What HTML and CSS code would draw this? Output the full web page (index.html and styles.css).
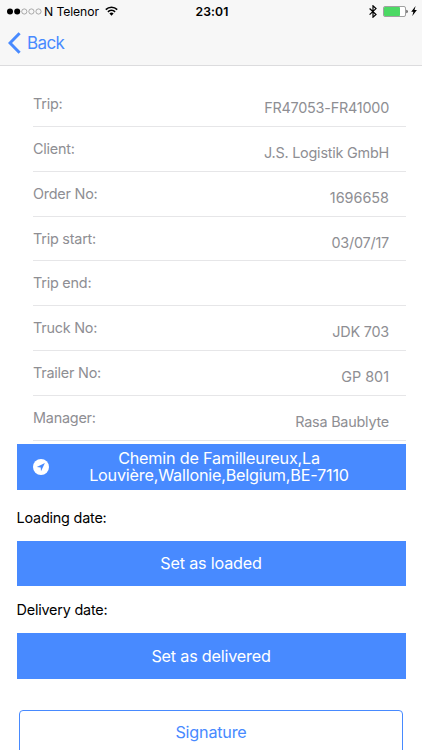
FILE: index.html
```
<!DOCTYPE html>
<html lang="en">
<head>
  <meta charset="UTF-8">
  <title>Trip details</title>
  <link rel="stylesheet" href="styles.css">
</head>
<body>
  <header class="header">
    <div class="status-bar">
      <div class="carrier">
        <svg class="signal" viewBox="0 0 35 7">
          <circle cx="3" cy="3.5" r="3"/>
          <circle cx="10.2" cy="3.5" r="3"/>
          <circle class="empty" cx="17.3" cy="3.5" r="2.6"/>
          <circle class="empty" cx="24.4" cy="3.5" r="2.6"/>
          <circle class="empty" cx="31.5" cy="3.5" r="2.6"/>
        </svg>
        <span class="carrier-name">N Telenor</span>
        <svg class="wifi" viewBox="0 0 13 10">
          <path d="M0.8 3.6a8.2 8.2 0 0 1 11.4 0M2.9 5.8a5.2 5.2 0 0 1 7.2 0"/>
          <path class="dot" d="M6.5 9.7L4.4 7.6a3 3 0 0 1 4.2 0z"/>
        </svg>
      </div>
      <div class="clock">23:01</div>
      <div class="power">
        <svg class="bluetooth" viewBox="0 0 8 13">
          <path d="M0.6 3.5l6.4 6L4 12.2V0.8l3 2.8-6.4 6"/>
        </svg>
        <svg class="battery" viewBox="0 0 25 11">
          <rect class="case" x="0.5" y="0.5" width="22" height="10" rx="1.5"/>
          <rect class="level" x="1" y="1" width="16" height="9" rx="0.8"/>
          <path class="tip" d="M23.3 3.7q1.5 0.3 1.5 1.8t-1.5 1.8z"/>
        </svg>
        <svg class="bolt" viewBox="0 0 6 10">
          <path d="M4.6 0.1L0.2 5.7h2.2L1.3 9.9l4.6-5.8H3.5z"/>
        </svg>
      </div>
    </div>
    <a href="#" class="back">
      <svg class="chevron" viewBox="0 0 13 22">
        <path d="M11.6 1.2L2 11l9.6 9.8"/>
      </svg>
      <span>Back</span>
    </a>
  </header>

  <main class="content">
    <div class="list">
      <div class="row"><span class="label">Trip:</span><span class="value">FR47053-FR41000</span></div>
      <div class="row"><span class="label">Client:</span><span class="value">J.S. Logistik GmbH</span></div>
      <div class="row"><span class="label">Order No:</span><span class="value number">1696658</span></div>
      <div class="row"><span class="label">Trip start:</span><span class="value">03/07/17</span></div>
      <div class="row"><span class="label">Trip end:</span><span class="value"></span></div>
      <div class="row"><span class="label">Truck No:</span><span class="value">JDK 703</span></div>
      <div class="row"><span class="label">Trailer No:</span><span class="value number">GP 801</span></div>
      <div class="row"><span class="label">Manager:</span><span class="value">Rasa Baublyte</span></div>
    </div>

    <button class="button address">
      <svg class="navigate" viewBox="0 0 16 16">
        <circle cx="8" cy="8" r="8"/>
        <path d="M11.9 4.1L3.8 8.1l3.9 0.3 0.3 3.8z"/>
      </svg>
      <span class="address-text">Chemin de Familleureux,La<br>Louvière,Wallonie,Belgium,BE-7110</span>
    </button>

    <p class="date loading">Loading date:</p>
    <button class="button">Set as loaded</button>

    <p class="date">Delivery date:</p>
    <button class="button">Set as delivered</button>

    <button class="button outline">Signature</button>
  </main>
</body>
</html>
```

FILE: styles.css
```
* {
  box-sizing: border-box;
}
body {
  margin: 0;
  height: 750px;
  overflow: hidden;
  background: #fff;
  color: #000;
  font-family: Inter, "Liberation Sans", sans-serif;
  font-size: 14.4px;
}
svg {
  display: block;
  flex: none;
}

/* header */
.header {
  height: 66px;
  background: #f7f7f7;
  border-bottom: 1px solid #dcdcde;
}
.status-bar {
  display: grid;
  grid-template-columns: 1fr auto 1fr;
  align-items: center;
  height: 22px;
  padding: 0 5px 0 7px;
  font-size: 12.2px;
}
.carrier {
  display: flex;
  align-items: center;
}
.signal {
  width: 35px;
  height: 7px;
}
.signal .empty {
  fill: none;
  stroke: #777;
  stroke-width: 0.6;
}
.carrier-name {
  margin-left: 2px;
  letter-spacing: -0.1px;
}
.wifi {
  width: 13px;
  height: 10px;
  margin-left: 6px;
  fill: none;
  stroke: #000;
  stroke-width: 1.6;
}
.wifi .dot {
  fill: #000;
  stroke: none;
}
.clock {
  font-weight: 600;
  letter-spacing: 0.1px;
}
.power {
  display: flex;
  align-items: center;
  justify-content: flex-end;
}
.bluetooth {
  width: 8px;
  height: 13px;
  margin-right: 6px;
  fill: none;
  stroke: #000;
  stroke-width: 1.2;
}
.battery {
  width: 25px;
  height: 11px;
  margin-right: 3px;
}
.battery .case {
  fill: #fff;
  stroke: #8a8a8a;
  stroke-width: 0.8;
}
.battery .level {
  fill: #4cd964;
}
.battery .tip {
  fill: #555;
}
.bolt {
  width: 6px;
  height: 10px;
}
.back {
  display: flex;
  align-items: center;
  width: 80px;
  height: 41px;
  padding-left: 8px;
  color: #488aff;
  font-size: 17px;
  letter-spacing: -0.6px;
  text-decoration: none;
}
.chevron {
  width: 13px;
  height: 22px;
  margin-right: 6px;
  fill: none;
  stroke: #488aff;
  stroke-width: 3;
}

/* trip info */
.content {
  padding: 16px 16.5px 0;
}
.list {
  padding-left: 16.5px;
}
.row {
  display: flex;
  justify-content: space-between;
  height: 44.85px;
  padding-right: 16.5px;
  border-bottom: 1px solid #e6e6e8;
  color: #8e8e93;
  letter-spacing: -0.22px;
  line-height: 20px;
}
.label {
  padding-top: 12px;
}
.value {
  padding-top: 16px;
}
.number {
  letter-spacing: 0;
}

/* buttons */
.button {
  display: flex;
  align-items: center;
  justify-content: center;
  width: 100%;
  height: 45.5px;
  margin: 0;
  padding: 0 16.5px;
  border: none;
  background: #488aff;
  color: #fff;
  font-family: inherit;
  font-size: 16.2px;
  letter-spacing: -0.2px;
}
.address {
  margin-top: 3.4px;
  line-height: 16.5px;
}
.navigate {
  width: 16px;
  height: 16px;
  fill: #fff;
}
.navigate path {
  fill: #488aff;
}
.address-text {
  flex: 1;
  text-align: center;
}
.date {
  margin: 14px 0 13px;
  letter-spacing: -0.2px;
  line-height: 20px;
}
.loading {
  margin-top: 18px;
}
.outline {
  width: 384px;
  margin: 31px auto 0;
  border: 1px solid #488aff;
  border-radius: 4px;
  background: #fff;
  color: #488aff;
}
```
